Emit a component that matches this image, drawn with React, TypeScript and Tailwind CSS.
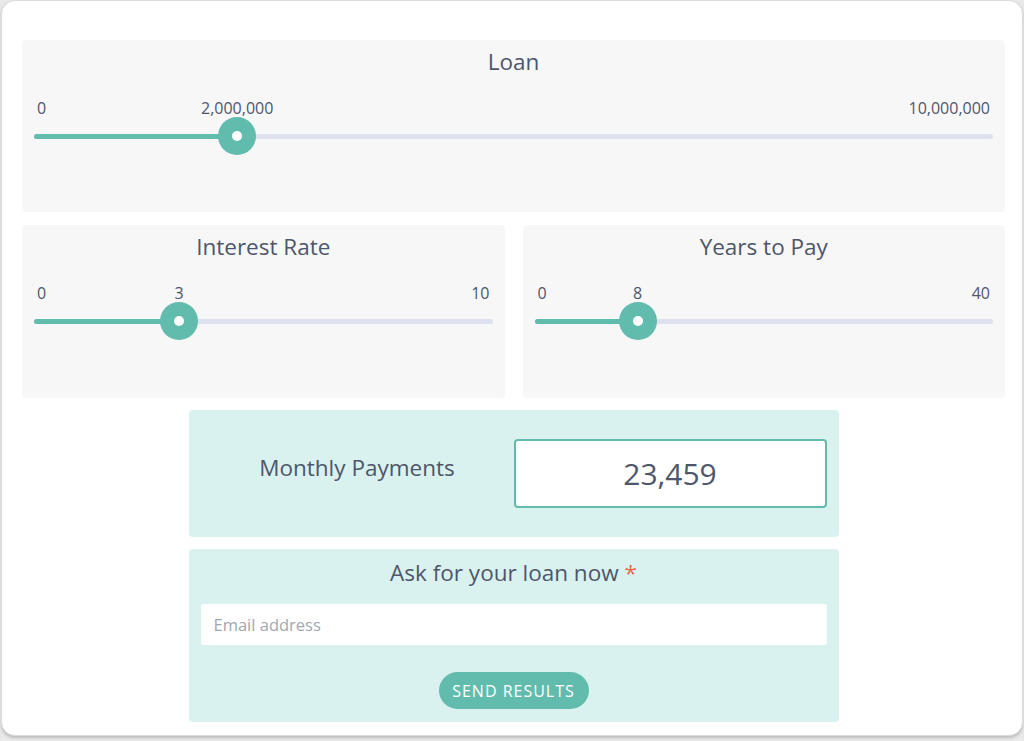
import React from 'react';

interface SliderProps {
  title: string;
  min: number;
  max: number;
  value: number;
  format?: (n: number) => string;
}

const fmt = (n: number) => n.toLocaleString('en-US');

// thumb is 38px wide, its centre travels between track ends inset by 19px
function Slider({ title, min, max, value, format = fmt }: SliderProps) {
  const pct = (value - min) / (max - min);
  const pos = `calc(19px + (100% - 38px) * ${pct})`;

  return (
    <div className="bg-[#f7f7f7] rounded-[4px] px-[12px] pt-[9px] h-full">
      <h3 className="text-center text-[22.5px] leading-[26px] text-[#4e566b]">{title}</h3>
      <div className="relative mt-[22px] h-[22px] text-[16px] leading-[22px] text-[#4e566b]">
        <span className="absolute left-[3px] top-0">{format(min)}</span>
        <span className="absolute top-0 -translate-x-1/2" style={{ left: pos }}>
          {format(value)}
        </span>
        <span className="absolute right-[3px] top-0">{format(max)}</span>
      </div>
      <div className="relative mt-[3px] h-[28px] flex items-center">
        <div className="w-full h-[5px] rounded-full bg-[#dde1ef]" />
        <div className="absolute left-0 h-[5px] rounded-full bg-[#62bcae]" style={{ width: pos }} />
        <div
          className="absolute w-[38px] h-[38px] rounded-full bg-[#62bcae] -translate-x-1/2 flex items-center justify-center"
          style={{ left: pos }}
        >
          <div className="w-[10px] h-[10px] rounded-full bg-white" />
        </div>
      </div>
    </div>
  );
}

export default function App() {
  return (
    <div
      className="w-[1024px] h-[741px] bg-[#e9e9e9] overflow-hidden"
      style={{ fontFamily: '"Open Sans", "Noto Sans", sans-serif' }}
    >
      <div className="mx-[1px] h-[736px] bg-white rounded-[14px] border border-[#dcdcdc] shadow-[0_2px_3px_#bdbdbd] pl-[20px] pr-[17px] pt-[39px]">
        <div className="h-[172px]">
          <Slider title="Loan" min={0} max={10000000} value={2000000} />
        </div>

        <div className="grid grid-cols-2 gap-[18px] mt-[13px] h-[173px]">
          <Slider title="Interest Rate" min={0} max={10} value={3} />
          <Slider title="Years to Pay" min={0} max={40} value={8} />
        </div>

        <div className="w-[650px] mx-auto mt-[12px] h-[127px] bg-[#d9f2ef] rounded-[4px] px-[12px] flex items-center">
          <div className="flex-1 text-center text-[22.5px] text-[#4e566b] -mt-[12px]">Monthly Payments</div>
          <div className="w-[313px] h-[69px] bg-white border-2 border-[#62bcae] rounded-[4px] flex items-center justify-center text-[30px] text-[#4e566b]">
            23,459
          </div>
        </div>

        <div className="w-[650px] mx-auto mt-[12px] h-[173px] bg-[#d9f2ef] rounded-[4px] px-[12px] pt-[9px] flex flex-col items-center">
          <h3 className="text-[22.5px] leading-[30px] text-[#4e566b]">
            Ask for your loan now <span className="text-[#e8694a]">*</span>
          </h3>
          <input
            type="email"
            placeholder="Email address"
            className="mt-[16px] w-full h-[41px] bg-white rounded-[3px] px-[13px] text-[16.5px] text-[#4e566b] placeholder:text-[#a3a6ae] outline-none"
          />
          <button className="mt-[27px] w-[150px] h-[37px] rounded-full bg-[#62bcae] text-white text-[16px] font-medium tracking-[1px]">
            SEND RESULTS
          </button>
        </div>
      </div>
    </div>
  );
}
